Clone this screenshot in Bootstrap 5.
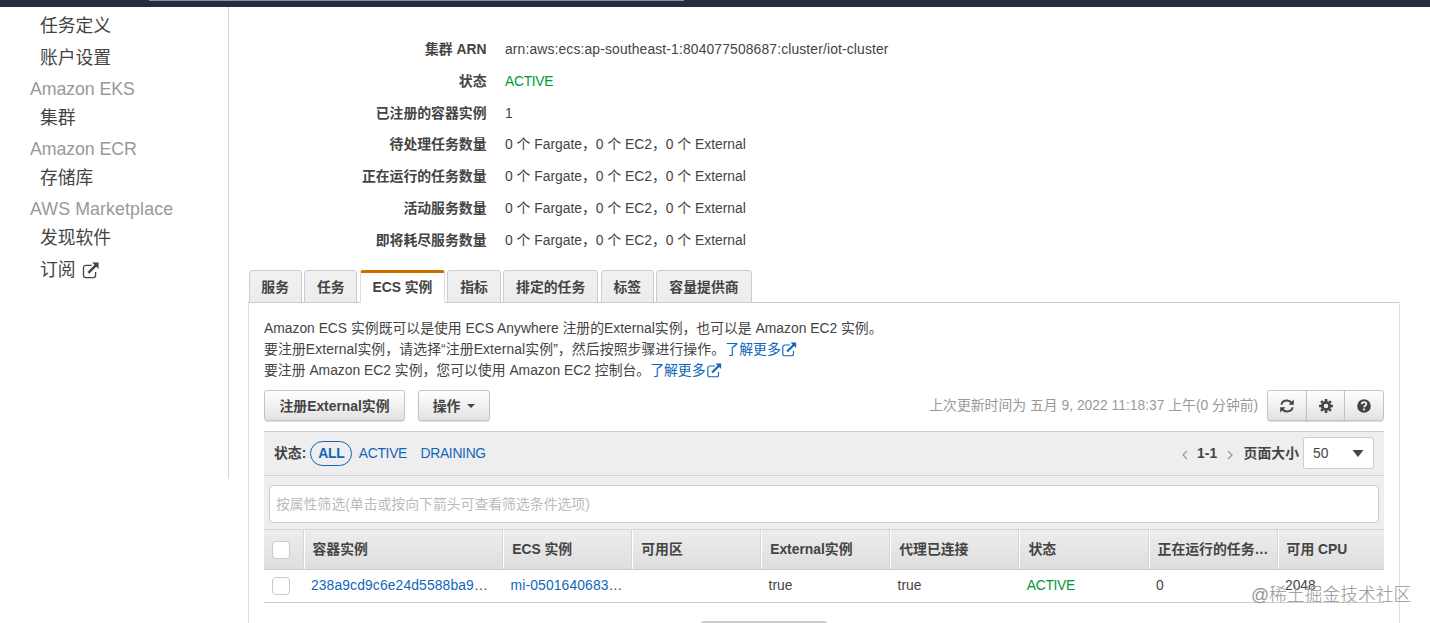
<!DOCTYPE html>
<html lang="zh-CN">
<head>
<meta charset="utf-8">
<meta name="viewport" content="width=device-width, initial-scale=1">
<title>Amazon ECS</title>
<link href="https://cdn.jsdelivr.net/npm/bootstrap@5.3.0/dist/css/bootstrap.min.css" rel="stylesheet">
<style>
body{font-family:"Liberation Sans","Noto Sans CJK SC",sans-serif;font-size:13.85px;line-height:21px;color:#444;background:#fff;height:623px;overflow:hidden}
a{color:#1166bb;text-decoration:none}
.topbar{height:7px;background:#232f3e}
.topbar span{display:block;margin-left:149px;width:535px;height:1px;background:#879596}
.side{width:229px;height:472px;border-right:1.5px solid #d4d4d4;padding-top:3px;font-size:17.8px;line-height:32px}
.side a{display:block;height:32px;padding-left:40px;color:#444}
.side .grp{height:28px;padding:0 0 0 30px;line-height:31px;color:#999;letter-spacing:-.1px}
.side .grp.wide{letter-spacing:.1px}
.info dt{width:238.5px;text-align:right;font-weight:700}
.info dd{margin:0 0 0 18.5px}
.info>div{height:31.8px;line-height:32px}
.info .arn{letter-spacing:.15px}
.ok{color:#093;letter-spacing:-.3px}
.tabs{height:33px;gap:2.5px;position:relative;z-index:1;margin-bottom:-1px;padding-left:.6px}
.tabs a{height:33px;border:1px solid #ccc;border-radius:3px 3px 0 0;background:linear-gradient(#f1f1f1,#ececec);color:#444;font-weight:700;line-height:32px;text-align:center}
.tabs a.active{background:#fff;border-color:#ddd;border-top:3px solid #cc6d00;border-bottom:0;line-height:28px}
.w53{width:53.2px}.w85{width:85px}.w95{width:95.1px}
.pane{width:1152px;border:1px solid #ccc;border-color:#ccc #ddd;height:340px;padding:15px 15px 0}
.btn-aws{font-size:13.85px;font-weight:700;color:#444;height:31px;line-height:20px;padding:5px 0 4px;border:1px solid #c3c3c3;border-radius:3px;background:linear-gradient(#fff,#e2e2e2);box-shadow:0 1px 1px #0002}
.caret{display:inline-block;border:4px solid transparent;border-top-color:#444;border-bottom:0;vertical-align:3px;margin-left:3px}
.icons .btn-aws{width:39.6px;line-height:0}
.filters{height:45px;background:#eee;border-top:1px solid #ccc;border-bottom:1px solid #d2d2d2;padding:0 10px}
.filters a{letter-spacing:-.3px}
.pill{border:1px solid #16b;border-radius:13px;width:42px;height:25px;line-height:23px;text-align:center;font-weight:700}
.size{width:71px;height:32px;background:#fff;border:1px solid #ccc;border-radius:3px;padding:0 9px 0 9px;margin-left:4px}
.find{height:53px;background:#eee;padding:9px 5px 0}
.find input{height:38px;border:1px solid #ccc;border-radius:4px;padding:0 6px;font-size:13.85px;box-shadow:none}
.find input::placeholder{color:#bbb;opacity:1}
.grid{display:grid;grid-template-columns:39.5px 199.7px 129px 129px 129px 129.2px 129.2px 129px 1fr}
.grid>*{min-width:0;white-space:nowrap}
.ghead{height:41px;background:linear-gradient(#ededed,#dedede);border-top:1px solid #d6d6d6;border-bottom:1px solid #c9c9c9;font-weight:700;line-height:39px}
.ghead>*{padding:0 8px;border-left:1px solid #fff}
.ghead>*:not(:last-child){border-right:1px solid #d6d6d6}
.ghead>:first-child{border-left:0}
.grow{height:33px;line-height:31px;border-bottom:1px solid #ccc}
.grow>*{padding-left:7.4px}
.grow a{letter-spacing:.14px}
.grid .chk{padding:0 0 0 8px}
.ghead .chk{padding-top:2px}
.box{display:block;width:18px;height:18px;background:#fff;border:1px solid #c9c9c9;border-radius:4px}
.stub{width:126px;height:3px;margin:18px 0 0 437px;border-top:2px solid #ccc;border-radius:5px 5px 0 0;background:#eee}
.wm{position:absolute;left:1251px;top:582px;font-size:17.8px;line-height:26px;color:#949494;font-weight:400;text-shadow:0 0 1px #fff;white-space:nowrap}
.wm{font-family:"Liberation Sans","Noto Sans CJK SC Light","Noto Sans CJK SC",sans-serif}
</style>
</head>
<body>
<svg class="d-none">
<symbol id="ext" viewBox="0 0 16 16"><path d="M9 3.200H3.600A2.200 2.200 0 0 0 1.400 5.400v7A2.200 2.200 0 0 0 3.600 14.600h7a2.200 2.200 0 0 0 2.200-2.200V9.500" fill="none" stroke="currentColor" stroke-width="1.200"/><path d="M6 10.200 13.200 3" stroke="currentColor" stroke-width="2.300"/><path d="M9.600.5h6v6z" fill="currentColor"/></symbol>
</svg>
<div class="topbar"><span></span></div>
<div class="d-flex">
<nav class="side flex-shrink-0">
<a href="#">任务定义</a><a href="#">账户设置</a>
<div class="grp">Amazon EKS</div><a href="#">集群</a>
<div class="grp">Amazon ECR</div><a href="#">存储库</a>
<div class="grp wide">AWS Marketplace</div><a href="#">发现软件</a>
<a href="#">订阅 <svg width="19" height="17" style="vertical-align:-3px"><use href="#ext"/></svg></a>
</nav>
<main style="padding-left:19px;padding-top:26px">
<dl class="info mb-0">
<div class="d-flex"><dt>集群 ARN</dt><dd class="arn">arn:aws:ecs:ap-southeast-1:804077508687:cluster/iot-cluster</dd></div>
<div class="d-flex"><dt>状态</dt><dd class="ok">ACTIVE</dd></div>
<div class="d-flex"><dt>已注册的容器实例</dt><dd>1</dd></div>
<div class="d-flex"><dt>待处理任务数量</dt><dd>0 个 Fargate，0 个 EC2，0 个 External</dd></div>
<div class="d-flex"><dt>正在运行的任务数量</dt><dd>0 个 Fargate，0 个 EC2，0 个 External</dd></div>
<div class="d-flex"><dt>活动服务数量</dt><dd>0 个 Fargate，0 个 EC2，0 个 External</dd></div>
<div class="d-flex"><dt>即将耗尽服务数量</dt><dd>0 个 Fargate，0 个 EC2，0 个 External</dd></div>
</dl>
<div class="tabs d-flex" style="margin-top:14.400px">
<a href="#" class="w53">服务</a><a href="#" class="w53">任务</a><a href="#" class="w85 active">ECS 实例</a><a href="#" class="w53">指标</a><a href="#" class="w95">排定的任务</a><a href="#" class="w53">标签</a><a href="#" class="w95">容量提供商</a>
</div>
<section class="pane">
<div>Amazon ECS 实例既可以是使用 ECS Anywhere 注册的External实例，也可以是 Amazon EC2 实例。</div>
<div style="letter-spacing:.1px">要注册External实例，请选择“注册External实例”，然后按照步骤进行操作。<a href="#">了解更多<svg width="16" height="15" style="vertical-align:-3px"><use href="#ext"/></svg></a></div>
<div>要注册 Amazon EC2 实例，您可以使用 Amazon EC2 控制台。<a href="#">了解更多<svg width="16" height="15" style="vertical-align:-3px"><use href="#ext"/></svg></a></div>
<div class="d-flex align-items-center" style="margin-top:9px">
<button class="btn btn-aws" style="width:141px">注册External实例</button>
<button class="btn btn-aws" style="width:72px;margin-left:13px">操作 <span class="caret"></span></button>
<span class="ms-auto" style="color:#999;margin-right:9px;padding-top:1px">上次更新时间为 五月 9, 2022 11:18:37 上午(0 分钟前)</span>
<div class="btn-group icons">
<button class="btn btn-aws" aria-label="刷新"><svg width="16" height="16" viewBox="0 0 16 16" fill="none" stroke="currentColor" stroke-width="2"><path d="M2.400 6.600C3 4 5.200 2.500 8 2.500c1.900 0 3.400.8 4.500 2.200M13.600 9.400C13 12 10.800 13.500 8 13.500c-1.900 0-3.400-.8-4.500-2.200"/><path d="M14.800 1.500v5.200H9.600zM1.200 14.500V9.300h5.200z" fill="currentColor" stroke="none"/></svg></button>
<button class="btn btn-aws" aria-label="设置"><svg width="16" height="16" viewBox="-8 -8 16 16" fill="none" stroke="currentColor"><circle r="3.700" stroke-width="2.800"/><path d="M0-6.900V-5M0 6.900V5M-6.900 0H-5M6.900 0H5M-4.900-4.900l1.400 1.400M4.900 4.900 3.500 3.500M4.900-4.900 3.500-3.500M-4.900 4.900l1.400-1.400" stroke-width="2.600"/></svg></button>
<button class="btn btn-aws" aria-label="帮助"><svg width="16" height="16" viewBox="0 0 16 16"><circle cx="8" cy="8" r="6.800" fill="currentColor"/><path d="M5.700 6.300C5.800 4.800 6.800 4.200 8 4.200c1.400 0 2.300.8 2.300 1.900 0 1.700-2.200 1.500-2.200 3.200" fill="none" stroke="#f4f4f4" stroke-width="1.800"/><path d="M7.100 10.500h2v1.800h-2z" fill="#f4f4f4"/></svg></button>
</div>
</div>
<div class="filters d-flex align-items-center" style="margin-top:10px">
<b style="padding-top:1px">状态:</b><a href="#" class="pill" style="margin-left:4px">ALL</a><a href="#" style="margin-left:6.500px">ACTIVE</a><a href="#" style="margin-left:13.500px">DRAINING</a>
<svg class="ms-auto" style="margin-top:3px" width="6" height="10" fill="none" stroke="#999" stroke-width="1.200"><path d="M5 1 1 5l4 4"/></svg>
<b style="margin:0 10px 0 9px">1-1</b>
<svg width="6" height="10" style="margin-top:3px" fill="none" stroke="#999" stroke-width="1.200"><path d="m1 1 4 4-4 4"/></svg>
<b style="margin-left:10.500px">页面大小</b>
<div class="size d-flex align-items-center justify-content-between"><span>50</span><svg width="12" height="7"><path d="M.5 0h11L6 7z" fill="#444"/></svg></div>
</div>
<div class="find"><input class="form-control" placeholder="按属性筛选(单击或按向下箭头可查看筛选条件选项)"></div>
<div class="grid ghead"><div class="chk d-flex align-items-center"><span class="box"></span></div><div>容器实例</div><div>ECS 实例</div><div>可用区</div><div>External实例</div><div>代理已连接</div><div>状态</div><div>正在运行的任务…</div><div>可用 CPU</div></div>
<div class="grid grow"><div class="chk d-flex align-items-center"><span class="box"></span></div><div><a href="#">238a9cd9c6e24d5588ba9</a>…</div><div><a href="#">mi-0501640683</a>…</div><div></div><div>true</div><div>true</div><div class="ok">ACTIVE</div><div>0</div><div>2048</div></div>
<div class="stub"></div>
</section>
</main>
</div>
<div class="wm">@稀土掘金技术社区</div>
<script src="https://cdn.jsdelivr.net/npm/bootstrap@5.3.0/dist/js/bootstrap.bundle.min.js"></script>
</body>
</html>
